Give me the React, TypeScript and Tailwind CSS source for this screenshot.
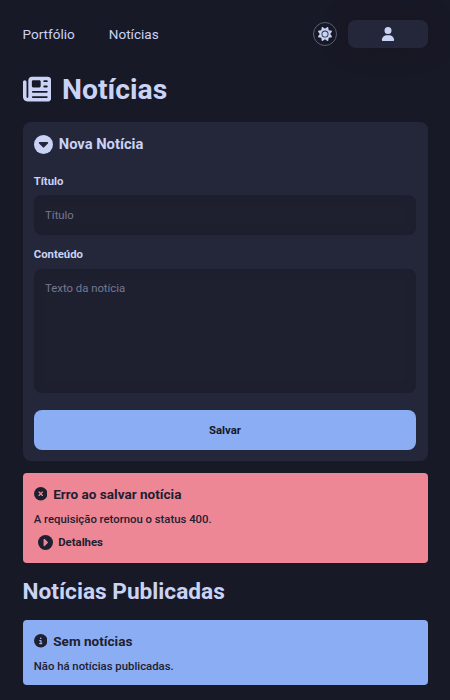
import React from "react";
import { FaNewspaper, FaSun, FaUser, FaCircleXmark, FaCircleInfo } from "react-icons/fa6";

function CaretCircle({ className, hole }: { className: string; hole: string }) {
  return (
    <svg viewBox="0 0 24 24" className={className}>
      <circle cx="12" cy="12" r="12" fill="currentColor" />
      <path d="M7.2 10h9.6L12 14.8z" fill={hole} stroke={hole} strokeWidth="2.2" strokeLinejoin="round" />
    </svg>
  );
}

export default function App() {
  return (
    <div className="h-[700px] overflow-hidden bg-[#181926] px-[22.5px] font-[Roboto,sans-serif] text-[11.33px] text-[#cad3f5]">
      <header className="flex h-[68px] items-center justify-between">
        <nav className="flex gap-[34px] text-[13.55px] leading-5">
          <a>Portfólio</a>
          <a>Notícias</a>
        </nav>
        <div className="flex items-center gap-[11px]">
          <button className="flex size-6 items-center justify-center rounded-full border border-[#5b6078]">
            <FaSun className="size-[14px] stroke-current stroke-[4px]" />
          </button>
          <button className="flex h-7 w-20 items-center justify-center rounded-lg bg-[#24273a] shadow-[0_0_22px_rgba(24,20,30,0.5)]">
            <FaUser className="size-[14px]" />
          </button>
        </div>
      </header>
      <h1 className="mt-[5px] flex h-8 items-center gap-[11.25px] text-[28.3px] leading-8 font-bold">
        <FaNewspaper className="size-[28.3px]" />
        <span className="pt-[2px]">Notícias</span>
      </h1>
      <section className="mt-[17px] h-[339px] rounded-lg bg-[#24273a] px-[11.25px] pt-[13px]">
        <div className="flex h-[19px] items-center gap-[6px] text-[14.73px] font-bold">
          <CaretCircle className="size-[19px]" hole="#24273a" />
          Nova Notícia
        </div>
        <label className="mt-[19px] block h-4 leading-4 font-bold">Título</label>
        <input placeholder="Título" className="mt-[6px] block h-10 w-full rounded-lg bg-[#1e2030] px-[11.33px] shadow-[inset_0_0_11px_rgba(24,25,38,0.3)] placeholder:text-[#747993]" />
        <label className="mt-[11px] block h-4 leading-4 font-bold">Conteúdo</label>
        <textarea placeholder="Texto da notícia" className="mt-[7px] block h-[124px] w-full resize-none rounded-lg bg-[#1e2030] px-[11.33px] py-[11px] leading-4 shadow-[inset_0_0_11px_rgba(24,25,38,0.3)] placeholder:text-[#747993]" />
        <button className="mt-[17px] block h-10 w-full rounded-lg bg-[#8aadf4] leading-4 font-bold text-[#181926]">Salvar</button>
      </section>
      <section className="mt-3 h-[90px] rounded bg-[#ed8796] px-[11.25px] pt-[13px] text-[#1e2030]">
        <h2 className="flex h-4 items-center gap-[6px] text-[13.55px] font-bold">
          <FaCircleXmark className="size-[13.5px]" />
          <span className="pt-px">Erro ao salvar notícia</span>
        </h2>
        <p className="mt-[9px] leading-4 font-medium">A requisição retornou o status 400.</p>
        <div className="mt-[7px] flex h-4 items-center gap-[5.5px] pl-1 font-bold">
          <CaretCircle className="size-[15px] -rotate-90" hole="#ed8796" />
          <span className="pb-px leading-4">Detalhes</span>
        </div>
      </section>
      <h2 className="mt-[15px] h-7 text-[22.66px] leading-7 font-bold">Notícias Publicadas</h2>
      <section className="mt-[14px] h-[65px] rounded bg-[#8aadf4] px-[11.25px] pt-[13px] text-[#1e2030]">
        <h2 className="flex h-4 items-center gap-[6px] text-[13.55px] font-bold">
          <FaCircleInfo className="size-[13.5px]" />
          <span className="pt-px">Sem notícias</span>
        </h2>
        <p className="mt-[9px] leading-4 font-medium">Não há notícias publicadas.</p>
      </section>
    </div>
  );
}
